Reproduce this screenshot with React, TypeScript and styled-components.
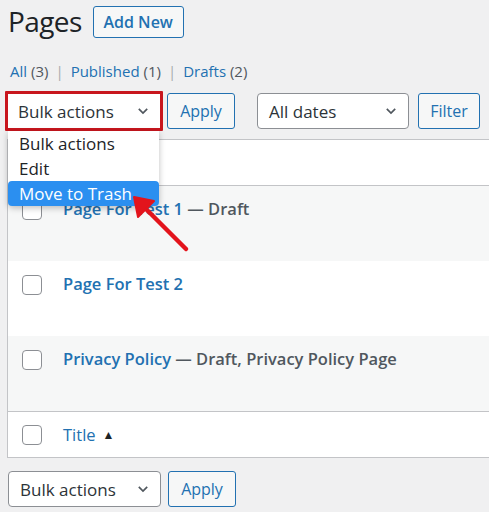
import React from "react";
import styled, { createGlobalStyle } from "styled-components";

const GlobalStyle = createGlobalStyle`
  body {
    margin: 0;
    background: #f0f0f1;
    font-family: "Open Sans", "Noto Sans", sans-serif;
    color: #2c3338;
  }
`;

const Page = styled.div`
  position: relative;
  width: 489px;
  height: 512px;
  overflow: hidden;
  padding-left: 8px;
  box-sizing: border-box;
`;

const Header = styled.div`
  display: flex;
  align-items: center;
  gap: 11px;
  height: 42px;
`;

const Title = styled.h1`
  margin: 0;
  font-size: 28px;
  font-weight: 400;
  color: #1d2327;
  letter-spacing: -0.6px;
`;

const OutlineButton = styled.button<{ $bold?: boolean; $w: number }>`
  box-sizing: border-box;
  width: ${(p) => p.$w}px;
  height: 36px;
  border: 1px solid #2271b1;
  border-radius: 3px;
  background: #f6f7f7;
  color: #2271b1;
  font-family: inherit;
  font-size: 16px;
  font-weight: ${(p) => (p.$bold ? 600 : 400)};
  padding: 0;
`;

const AddNew = styled(OutlineButton)`
  height: 32px;
  margin-top: 2px;
`;

const SubLinks = styled.div`
  margin: 18px 0 0 2px;
  font-size: 15px;
  color: #50575e;
  height: 22px;
  line-height: 22px;
`;

const SubLink = styled.span`
  color: #2271b1;
`;

const Sep = styled.span`
  color: #a7aaad;
  margin: 0 7px;
`;

const Toolbar = styled.div<{ $top: number }>`
  display: flex;
  align-items: center;
  height: 38px;
  margin-top: ${(p) => p.$top}px;
`;

const BulkWrap = styled.div`
  position: relative;
  margin-left: -3px;
  border: 3px solid #c8161e;
  border-radius: 1px;
  width: 152px;
  height: 34px;
  margin-right: 4px;
`;

const Select = styled.div<{ $w: number }>`
  box-sizing: border-box;
  width: ${(p) => p.$w}px;
  height: 36px;
  border: 1px solid #8c8f94;
  border-radius: 4px;
  background: #fff;
  display: flex;
  align-items: center;
  justify-content: space-between;
  padding: 0 10px 0 11px;
  font-size: 17px;
  color: #2c3338;
`;

const InnerSelect = styled(Select)`
  height: 34px;
  border: none;
  border-radius: 0;
  padding-left: 10px;
`;

const Menu = styled.div`
  position: absolute;
  left: 0;
  top: 37px;
  width: 151px;
  background: #fff;
  border-radius: 0 0 5px 5px;
  box-shadow: 0 2px 6px rgba(0, 0, 0, 0.25);
  z-index: 5;
`;

const MenuItem = styled.div<{ $active?: boolean }>`
  height: 25px;
  line-height: 25px;
  padding-left: 11px;
  font-size: 17px;
  color: ${(p) => (p.$active ? "#fff" : "#1d2327")};
  background: ${(p) => (p.$active ? "#2b8ff0" : "transparent")};
  border-radius: ${(p) => (p.$active ? "4px" : "0")};
`;

const Table = styled.div`
  margin-top: 9px;
  margin-left: -1px;
  background: #fff;
  border: 1px solid #c3c4c7;
  border-right: none;
  width: 482px;
`;

const HeadRow = styled.div`
  height: 45px;
  border-bottom: 1px solid #c3c4c7;
`;

const Row = styled.div<{ $alt?: boolean }>`
  height: 75px;
  display: flex;
  align-items: flex-start;
  background: ${(p) => (p.$alt ? "#f6f7f7" : "#fff")};
  padding-top: 13px;
  box-sizing: border-box;
`;

const FootRow = styled.div`
  height: 45px;
  border-top: 1px solid #c3c4c7;
  display: flex;
  align-items: center;
`;

const Check = styled.span`
  box-sizing: border-box;
  width: 20px;
  height: 20px;
  border: 1px solid #8c8f94;
  border-radius: 4px;
  background: #fff;
  margin: 1px 21px 0 14px;
  flex: none;
`;

const RowTitle = styled.div`
  font-size: 16.5px;
  font-weight: 600;
  color: #50575e;
  line-height: 20px;
`;

const RowLink = styled.span`
  color: #2271b1;
`;

const ColLink = styled.span`
  font-size: 16.5px;
  color: #2271b1;
`;

const SortArrow = styled.span`
  font-size: 12px;
  color: #1d2327;
  margin-left: 7px;
  vertical-align: 2px;
`;

const Chevron = () => (
  <svg width="14" height="14" viewBox="0 0 20 20">
    <path d="M4 7l6 6 6-6" fill="none" stroke="#50575e" strokeWidth="2.4" />
  </svg>
);

const Arrow = styled.svg`
  position: absolute;
  left: 125px;
  top: 188px;
  z-index: 6;
`;

const App: React.FC = () => {
  return (
    <Page>
      <GlobalStyle />
      <Header>
        <Title>Pages</Title>
        <AddNew $bold $w={91}>Add New</AddNew>
      </Header>
      <SubLinks>
        <SubLink>All</SubLink> (3)
        <Sep>|</Sep>
        <SubLink>Published</SubLink> (1)
        <Sep>|</Sep>
        <SubLink>Drafts</SubLink> (2)
      </SubLinks>
      <Toolbar $top={10}>
        <BulkWrap>
          <InnerSelect $w={152}>
            Bulk actions <Chevron />
          </InnerSelect>
          <Menu>
            <MenuItem>Bulk actions</MenuItem>
            <MenuItem>Edit</MenuItem>
            <MenuItem $active>Move to Trash</MenuItem>
          </Menu>
        </BulkWrap>
        <OutlineButton $w={68}>Apply</OutlineButton>
        <div style={{ width: 22 }} />
        <Select $w={152}>
          All dates <Chevron />
        </Select>
        <div style={{ width: 9 }} />
        <OutlineButton $w={62}>Filter</OutlineButton>
      </Toolbar>
      <Table>
        <HeadRow />
        <Row $alt>
          <Check />
          <RowTitle>
            <RowLink>Page For Test 1</RowLink> — Draft
          </RowTitle>
        </Row>
        <Row>
          <Check />
          <RowTitle>
            <RowLink>Page For Test 2</RowLink>
          </RowTitle>
        </Row>
        <Row $alt>
          <Check />
          <RowTitle>
            <RowLink>Privacy Policy</RowLink> — Draft, Privacy Policy Page
          </RowTitle>
        </Row>
        <FootRow>
          <Check />
          <ColLink>
            Title<SortArrow>▲</SortArrow>
          </ColLink>
        </FootRow>
      </Table>
      <Toolbar $top={12}>
        <Select $w={153} style={{ marginRight: 7 }}>
          Bulk actions <Chevron />
        </Select>
        <OutlineButton $w={68}>Apply</OutlineButton>
      </Toolbar>
      <Arrow width="70" height="70" viewBox="0 0 70 70">
        <line x1="61" y1="61" x2="14" y2="14" stroke="#e3141c" strokeWidth="4.5" strokeLinecap="round" />
        <path d="M9 9 L29 13 L13 29 Z" fill="#e3141c" stroke="#e3141c" strokeWidth="2" strokeLinejoin="round" />
      </Arrow>
    </Page>
  );
};

export default App;
